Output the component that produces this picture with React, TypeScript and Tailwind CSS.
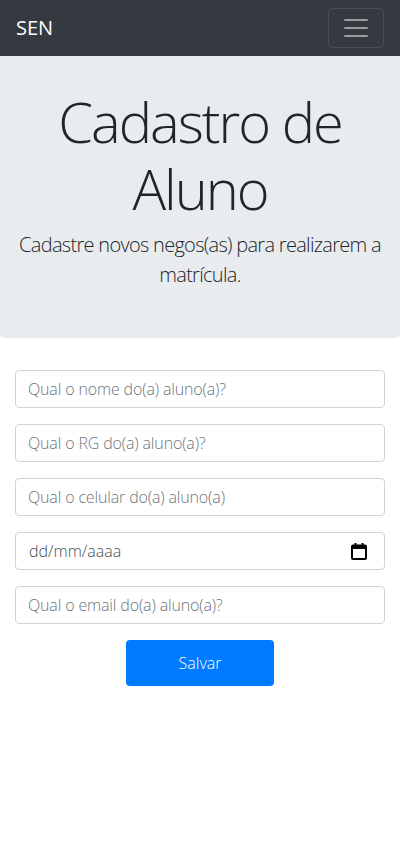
import React from "react";

const fields = [
  "Qual o nome do(a) aluno(a)?",
  "Qual o RG do(a) aluno(a)?",
  "Qual o celular do(a) aluno(a)",
];

const CalendarIcon = () => (
  <svg width="16" height="17" viewBox="0 0 16 17" fill="none">
    <rect x="1" y="2.5" width="14" height="13.5" rx="1" stroke="#000" strokeWidth="2" />
    <rect x="1" y="2.5" width="14" height="3.5" fill="#000" />
    <rect x="3.5" y="0" width="2" height="3" fill="#000" />
    <rect x="10.5" y="0" width="2" height="3" fill="#000" />
  </svg>
);

const App: React.FC = () => {
  return (
    <div className="min-h-[868px] bg-white text-[#212529] font-['Open_Sans',sans-serif]">
      <nav className="h-14 bg-[#343a40] flex items-center justify-between px-4">
        <span className="text-white text-[20px] font-normal">SEN</span>
        <button className="w-[56px] h-[40px] border border-white/10 rounded flex items-center justify-center">
          <svg width="30" height="30" viewBox="0 0 30 30">
            <path
              d="M4 7h22M4 15h22M4 23h22"
              stroke="rgba(255,255,255,0.5)"
              strokeWidth="2"
              strokeLinecap="round"
            />
          </svg>
        </button>
      </nav>

      <div className="bg-[#e9ecef] rounded-b-[5px] px-4 pt-8 pb-8 mb-8 text-center">
        <h1 className="text-[56px] leading-[1.2] font-light mb-2 tracking-[-2px]">
          Cadastro de Aluno
        </h1>
        <p className="text-[20px] leading-[1.5] font-light mb-4 tracking-[-0.7px]">
          Cadastre novos negos(as) para realizarem a matrícula.
        </p>
      </div>

      <form className="px-[15px]">
        {fields.map((f) => (
          <div key={f} className="mb-4">
            <input
              type="text"
              placeholder={f}
              className="w-full h-[38px] border border-[#ced4da] rounded px-3 text-[16px] font-light tracking-[-0.15px] placeholder:text-[#6c757d] outline-none"
            />
          </div>
        ))}
        <div className="mb-4">
          <div className="w-full h-[38px] border border-[#ced4da] rounded pl-[13px] pr-[17px] flex items-center justify-between text-[16px] font-light text-[#495057]">
            <span>dd/mm/aaaa</span>
            <CalendarIcon />
          </div>
        </div>
        <div className="mb-4">
          <input
            type="email"
            placeholder="Qual o email do(a) aluno(a)?"
            className="w-full h-[38px] border border-[#ced4da] rounded px-3 text-[16px] font-light tracking-[-0.15px] placeholder:text-[#6c757d] outline-none"
          />
        </div>
        <div className="flex justify-center">
          <button
            type="button"
            className="w-[148px] h-[46px] bg-[#007bff] text-white rounded text-[16px] font-light"
          >
            Salvar
          </button>
        </div>
      </form>
    </div>
  );
};

export default App;
